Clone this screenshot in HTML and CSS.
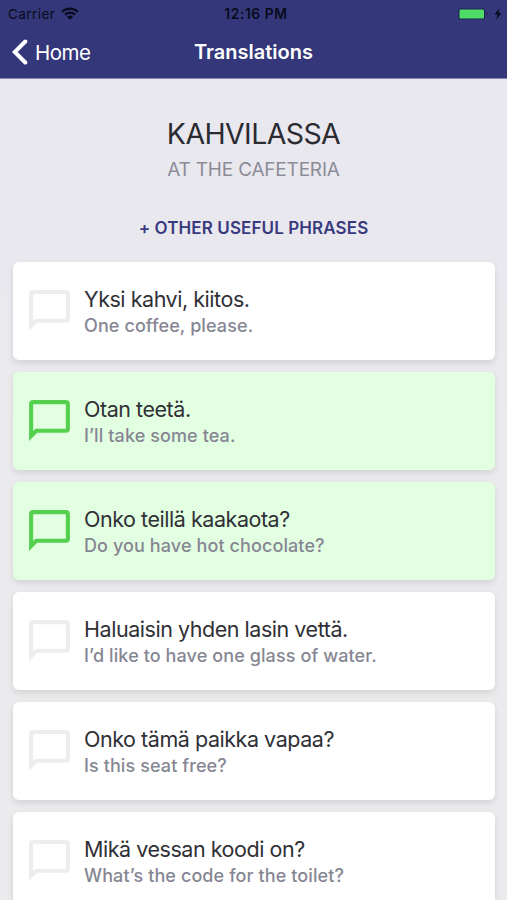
FILE: index.html
```html
<!DOCTYPE html>
<html lang="en">
<head>
<meta charset="utf-8">
<title>Translations</title>
<link rel="stylesheet" href="styles.css">
</head>
<body>
<svg class="symbols" aria-hidden="true">
  <symbol id="bubble" viewBox="0 0 24 24"><path fill-rule="evenodd" d="M4 2h16a2 2 0 0 1 2 2v12a2 2 0 0 1-2 2H6l-4 4V4a2 2 0 0 1 2-2zM4 4v13.2L5.2 16H20V4z"/></symbol>
</svg>
<div class="screen">
  <header class="header">
    <div class="status">
      <div class="status-left"><span class="carrier">Carrier</span>
        <svg class="wifi" viewBox="0 0 18 13"><path d="M1.2 4.8a11 11 0 0 1 15.6 0M4 7.7a7.1 7.1 0 0 1 10 0" fill="none" stroke="currentColor" stroke-width="2.2"/><path d="M9 12.8 5.9 9.8a4.4 4.4 0 0 1 6.2 0z"/></svg>
      </div>
      <span class="time">12:16 PM</span>
      <div class="status-right">
        <svg class="battery" viewBox="0 0 31 12"><rect x=".5" y=".5" width="26.5" height="11" rx="2" fill="#1c2450"/><rect x="1.5" y="1.6" width="24.5" height="8.8" rx="1" fill="#4fdc68"/><path d="M28.5 4v4q2-2 0-4" fill="#1c2450"/></svg>
        <svg class="bolt" viewBox="0 0 8 12"><path d="M5.5.5.5 6.5h3L2.2 11.5l5.3-6.3H4.6z"/></svg>
      </div>
    </div>
    <nav class="nav">
      <div class="back"><svg class="chevron" viewBox="0 0 16 26"><path d="M13.3 2.5 2.8 13l10.5 10.5" fill="none" stroke="currentColor" stroke-width="4" stroke-linecap="round" stroke-linejoin="miter"/></svg><span>Home</span></div>
      <h1 class="title">Translations</h1>
      <span></span>
    </nav>
  </header>
  <section class="intro">
    <h2 class="topic">KAHVILASSA</h2>
    <p class="topic-translation">AT THE CAFETERIA</p>
    <a class="more">+ OTHER USEFUL PHRASES</a>
  </section>
  <main class="list">
    <article class="card"><svg class="bubble"><use href="#bubble"/></svg><div class="text"><p class="phrase">Yksi kahvi, kiitos.</p><p class="meaning">One coffee, please.</p></div></article>
    <article class="card learned"><svg class="bubble"><use href="#bubble"/></svg><div class="text"><p class="phrase">Otan teetä.</p><p class="meaning">I’ll take some tea.</p></div></article>
    <article class="card learned"><svg class="bubble"><use href="#bubble"/></svg><div class="text"><p class="phrase">Onko teillä kaakaota?</p><p class="meaning">Do you have hot chocolate?</p></div></article>
    <article class="card"><svg class="bubble"><use href="#bubble"/></svg><div class="text"><p class="phrase">Haluaisin yhden lasin vettä.</p><p class="meaning">I’d like to have one glass of water.</p></div></article>
    <article class="card"><svg class="bubble"><use href="#bubble"/></svg><div class="text"><p class="phrase">Onko tämä paikka vapaa?</p><p class="meaning">Is this seat free?</p></div></article>
    <article class="card"><svg class="bubble"><use href="#bubble"/></svg><div class="text"><p class="phrase">Mikä vessan koodi on?</p><p class="meaning">What’s the code for the toilet?</p></div></article>
  </main>
</div>
</body>
</html>
```
FILE: styles.css
```css
* { box-sizing: border-box; }
body { margin: 0; font-family: Inter, "Liberation Sans", sans-serif; background: #e9e8ef; }
h1, h2, p { margin: 0; font-weight: 400; white-space: nowrap; }
svg { display: block; flex: none; fill: currentColor; }
.symbols { position: absolute; width: 0; height: 0; }
.screen { height: 900px; overflow: hidden; background: linear-gradient(#e9e8ef 250px, #ebebed 420px); }
.header { height: 79px; background: #343779; border-bottom: 1px solid #8385ae; color: #fff; }
.status { height: 27px; padding: 0 5px 0 8px; display: grid; grid-template-columns: 1fr auto 1fr; align-items: center; color: #080b1b; }
.status-left { display: flex; align-items: center; gap: 6px; }
.carrier { font-size: 13.5px; letter-spacing: .45px; }
.wifi { width: 18px; height: 13px; }
.time { padding-left: 2px; font-size: 13.8px; font-weight: 600; letter-spacing: .6px; }
.status-right { display: flex; justify-content: flex-end; align-items: center; gap: 5px; }
.battery { width: 31px; height: 12px; }
.bolt { width: 8px; height: 12px; }
.nav { height: 50px; padding: 0 11px; display: grid; grid-template-columns: 1fr auto 1fr; align-items: center; }
.back { display: flex; align-items: center; gap: 7px; padding-left: 1px; font-size: 20.5px; letter-spacing: -.5px; }
.chevron { width: 16px; height: 26px; }
.title { font-size: 20px; font-weight: 600; letter-spacing: 0; }
.intro { height: 183px; padding-top: 36px; display: flex; flex-direction: column; align-items: center; }
.topic { font-size: 28.5px; line-height: 38px; letter-spacing: -.6px; color: #2b2b31; }
.topic-translation { margin-top: 5px; font-size: 19px; line-height: 24px; letter-spacing: -.2px; color: #8c8c96; }
.more { margin-top: 34px; font-size: 17px; line-height: 24px; font-weight: 600; color: #393a7e; letter-spacing: .1px; }
.list { padding: 0 12px 0 13px; display: flex; flex-direction: column; gap: 12px; }
.card { height: 98px; flex: none; padding-left: 12px; display: flex; align-items: center; gap: 10px; border-radius: 6px; background: #fff; box-shadow: 0 3px 6px rgba(0, 0, 0, .1); }
.learned { background: #e3ffe2; }
.bubble { width: 49px; height: 49px; margin-bottom: 1px; color: #ededed; }
.learned .bubble { color: #55cf4e; }
.text { padding-top: 2px; }
.phrase { font-size: 21.5px; line-height: 27px; letter-spacing: -.46px; color: #303036; }
.meaning { font-size: 18px; line-height: 25px; font-weight: 500; letter-spacing: .1px; color: #868693; }
```
